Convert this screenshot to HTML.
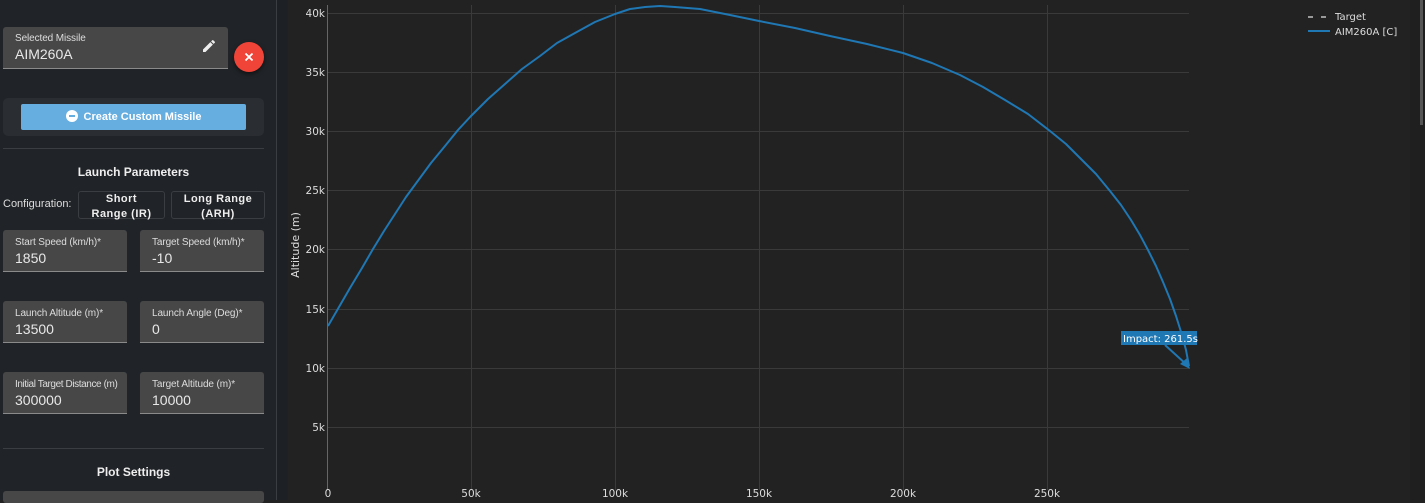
<!DOCTYPE html>
<html><head><meta charset="utf-8"><style>
body{margin:0;width:1425px;height:500px;overflow:hidden;background:#222;font-family:"Liberation Sans",sans-serif;position:relative}
.side{position:absolute;left:0;top:0;width:276px;height:500px;background:#202327;border-right:1px solid #3a3d42}
.strip{position:absolute;left:277px;top:0;width:11px;height:500px;background:#1d2024}
.field{position:absolute;background:#474747;border-bottom:1px solid #8a8a8a;border-radius:3px 3px 0 0;color:#e8e8e8}
.field .l{position:absolute;left:12px;top:7px;font-size:10px;color:#ddd;white-space:nowrap;letter-spacing:-.1px}
.field .v{position:absolute;left:12px;top:20px;font-size:14px}
</style></head><body>
<div class="side">
 <div class="field" style="left:3px;top:27px;width:225px;height:41px"><div class="l" style="top:6px">Selected Missile</div><div class="v" style="top:19px">AIM260A</div>
  <svg style="position:absolute;left:198px;top:11px" width="16" height="16" viewBox="0 0 24 24"><path fill="#eee" d="M3 17.25V21h3.75L17.8 9.94l-3.75-3.75L3 17.25zM20.7 7.04a1 1 0 000-1.41l-2.34-2.34a1 1 0 00-1.41 0l-1.83 1.83 3.75 3.75 1.83-1.83z"/></svg></div>
 <div style="position:absolute;left:234px;top:42px;width:30px;height:30px;border-radius:50%;background:#f04438;box-shadow:0 2px 4px rgba(0,0,0,.5)"><svg width="30" height="30"><path d="M11.5 11.5L18.5 18.5M18.5 11.5L11.5 18.5" stroke="#fff" stroke-width="1.8"/></svg></div>
 <div style="position:absolute;left:3px;top:98px;width:261px;height:38px;background:#2a2d32;border-radius:5px"></div>
 <div style="position:absolute;left:21px;top:104px;width:225px;height:26px;background:#66ade0;border-radius:2px;color:#fff;font-size:11px;font-weight:bold;text-align:center;line-height:26px"><svg width="12" height="12" style="vertical-align:-2px;margin-right:6px"><circle cx="6" cy="6" r="6" fill="#fff"/><path d="M3 6H9" stroke="#66ade0" stroke-width="2"/></svg>Create Custom Missile</div>
 <div style="position:absolute;left:3px;top:148px;width:261px;border-top:1px solid #3a3d42"></div>
 <div style="position:absolute;left:0;width:267px;top:165px;text-align:center;color:#eee;font-size:12px;font-weight:bold">Launch Parameters</div>
 <div style="position:absolute;left:3px;top:198px;color:#ddd;font-size:11px">Configuration:</div>
 <div style="position:absolute;left:78px;top:191px;width:85px;height:26px;border:1px solid #3a3d42;border-radius:3px;color:#eee;font-size:11px;font-weight:bold;text-align:center;line-height:15px;letter-spacing:.5px;white-space:nowrap">Short<br>Range (IR)</div>
 <div style="position:absolute;left:171px;top:191px;width:92px;height:26px;border:1px solid #3a3d42;border-radius:3px;color:#eee;font-size:11px;font-weight:bold;text-align:center;line-height:15px;letter-spacing:.5px;white-space:nowrap">Long Range<br>(ARH)</div>
 <div class="field" style="left:3px;top:230px;width:124px;height:41px"><div class="l">Start Speed (km/h)*</div><div class="v">1850</div></div>
 <div class="field" style="left:140px;top:230px;width:124px;height:41px"><div class="l">Target Speed (km/h)*</div><div class="v">-10</div></div>
 <div class="field" style="left:3px;top:301px;width:124px;height:41px"><div class="l">Launch Altitude (m)*</div><div class="v">13500</div></div>
 <div class="field" style="left:140px;top:301px;width:124px;height:41px"><div class="l">Launch Angle (Deg)*</div><div class="v">0</div></div>
 <div class="field" style="left:3px;top:372px;width:124px;height:41px"><div class="l" style="letter-spacing:-.4px">Initial Target Distance (m)</div><div class="v">300000</div></div>
 <div class="field" style="left:140px;top:372px;width:124px;height:41px"><div class="l">Target Altitude (m)*</div><div class="v">10000</div></div>
 <div style="position:absolute;left:3px;top:448px;width:261px;border-top:1px solid #3a3d42"></div>
 <div style="position:absolute;left:0;width:267px;top:465px;text-align:center;color:#eee;font-size:12px;font-weight:bold">Plot Settings</div>
 <div style="position:absolute;left:3px;top:491px;width:261px;height:12px;background:#474747;border-radius:3px"></div>
</div>
<div class="strip"></div>
<div style="position:absolute;right:0;top:0;width:15px;height:500px;background:#1f1f1f"></div>
<div style="position:absolute;right:2px;top:0;width:3px;height:125px;background:#555"></div>
<svg style="position:absolute;left:0;top:0" width="1425" height="500">
 <g stroke="#3a3a3a" stroke-width="1">
  <path d="M328 13.5H1189M328 72.5H1189M328 131.5H1189M328 190.5H1189M328 249.5H1189M328 309.5H1189M328 368.5H1189M328 427.5H1189"/>
  <path d="M471.5 5V490M615.5 5V490M759.5 5V490M903.5 5V490M1047.5 5V490"/>
 </g>
 <path d="M327.5 5V490" stroke="#666"/>
 <path d="M328 326 L339 307 L350 288 L362 268 L373 249 L384 231 L395 214 L406 197 L417 182 L431 163 L445 146 L458 130 L471 116 L488 99 L505 84 L522 69 L540 56 L557 43 L575 33 L595 22 L615 14 L630 9 L645 7 L660 6 L675 7 L700 9 L730 15 L759 21 L795 28 L830 36 L867 44 L903 53 L932 63 L960 75 L983 87 L1005 100 L1028 114 L1050 131 L1066 144 L1080 158 L1096 174 L1110 191 L1121 205 L1131 220 L1140 235 L1148 250 L1156 266 L1163 282 L1170 299 L1176 316 L1182 335 L1186 350 L1189 366" fill="none" stroke="#1f77b4" stroke-width="2" stroke-linejoin="round"/>
 <path d="M1165 345 L1187 365" stroke="#1f77b4" stroke-width="2"/>
 <path d="M1180 364 L1190 369 L1187 358Z" fill="#1f77b4"/>
 <rect x="1121" y="331" width="76" height="14" fill="#1f77b4"/>
 <text x="1123" y="342" fill="#fff" font-size="10" font-family="DejaVu Sans">Impact: 261.5s</text>
 <text x="299" y="245" fill="#ddd" font-size="11" font-family="DejaVu Sans" transform="rotate(-90 299 245)" text-anchor="middle">Altitude (m)</text>
 <g fill="#ddd" font-size="10.5" font-family="DejaVu Sans" text-anchor="end">
  <text x="325" y="17">40k</text><text x="325" y="76">35k</text><text x="325" y="135">30k</text><text x="325" y="194">25k</text><text x="325" y="253">20k</text><text x="325" y="313">15k</text><text x="325" y="372">10k</text><text x="325" y="431">5k</text>
 </g>
 <g fill="#ddd" font-size="10.5" font-family="DejaVu Sans" text-anchor="middle">
  <text x="328" y="497">0</text><text x="471" y="497">50k</text><text x="615" y="497">100k</text><text x="759" y="497">150k</text><text x="903" y="497">200k</text><text x="1047" y="497">250k</text>
 </g>
 <path d="M1308 17H1313M1321 17H1326" stroke="#999" stroke-width="2"/>
 <path d="M1308 31H1330" stroke="#1f77b4" stroke-width="2"/>
 <g fill="#ddd" font-size="10" font-family="DejaVu Sans"><text x="1335" y="20">Target</text><text x="1335" y="35">AIM260A [C]</text></g>
</svg>
</body></html>
